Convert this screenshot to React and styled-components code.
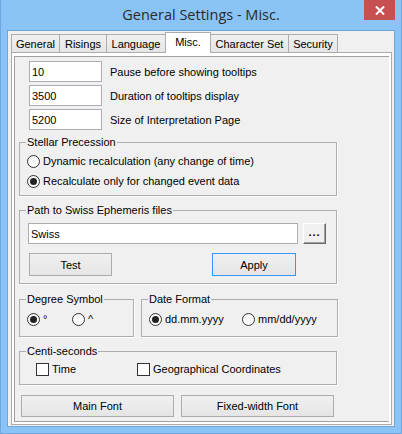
import React from 'react';
import styled, { createGlobalStyle } from 'styled-components';

const Global = createGlobalStyle`
  html, body { margin: 0; padding: 0; }
  body {
    width: 402px; height: 434px; overflow: hidden;
    background: #8ac4f6;
    font-family: "Liberation Sans", Arial, sans-serif;
    font-size: 11px; color: #000;
  }
  * { box-sizing: border-box; }
`;

const Window = styled.div`
  position: relative;
  width: 402px; height: 434px;
  display: flex; flex-direction: column;
  background: #8ac4f6;
  border: 1px solid #6fa6dc;
  border-top: none;
  padding: 0 6px 6px;
`;

const TitleBar = styled.div`
  height: 30px;
  display: flex; align-items: center; justify-content: center;
  font-family: "Open Sans", "Noto Sans", sans-serif;
  font-size: 14.5px; color: #2a2a2a;
  padding-bottom: 1px;
`;

const CloseButton = styled.div`
  position: absolute; top: 0; right: 6px;
  width: 31px; height: 20px;
  background: #c75050;
  display: flex; align-items: center; justify-content: center;
`;

const Client = styled.div`
  flex: 1;
  display: flex; flex-direction: column;
  background: #f0f0f0;
  border: 1px solid #6fa6dc;
  padding: 1px 2px 1px 3px;
`;

const TabRow = styled.div`
  height: 20px;
  display: flex; align-items: flex-start;
`;

const Tab = styled.div`
  position: relative;
  width: ${p => p.$w}px;
  margin-right: -1px;
  margin-top: ${p => (p.$active ? 0 : 2)}px;
  height: ${p => (p.$active ? 21 : 18)}px;
  border: 1px solid #acacac;
  border-bottom: none;
  background: ${p => (p.$active ? '#fff' : 'linear-gradient(#f0f0f0, #e5e5e5)')};
  z-index: ${p => (p.$active ? 2 : 1)};
  display: flex; align-items: center; justify-content: center;
  padding-bottom: ${p => (p.$active ? 3 : 0)}px;
  font-size: 11px; white-space: nowrap;
`;

const Panel = styled.div`
  flex: 1;
  display: flex;
  border: 1px solid #acacac;
  background: #fff;
  padding: 3px 2px 2px 2px;
`;

const Form = styled.div`
  flex: 1;
  display: flex; flex-direction: column; align-items: flex-start;
  background: #f0f0f0;
  border-top: 1px solid #a0a0a0;
  border-left: 1px solid #a0a0a0;
  border-bottom: 1px solid #a0a0a0;
  padding: 4px 0 0 4px;
`;

const InputList = styled.div`
  display: flex; flex-direction: column; gap: 3px;
  padding-left: 10px;
`;

const InputRow = styled.div`
  display: flex; align-items: center; gap: 8px;
`;

const TextInput = styled.input`
  width: ${p => p.$w}px; height: 21px;
  border: 1px solid #abadb3;
  background: #fff;
  padding: 0 2px;
  font-family: "Liberation Sans", Arial, sans-serif;
  font-size: 11px; color: #000;
  outline: none;
`;

const Group = styled.fieldset`
  margin: ${p => p.$mt || 0}px 0 0 0;
  width: ${p => p.$w}px;
  min-width: 0;
  border: 1px solid #adadad;
  box-shadow: 1px 1px 0 #fff;
  padding: ${p => p.$pad};
  display: flex; flex-direction: column;
`;

const Legend = styled.legend`
  margin-left: ${p => p.$ml}px;
  padding: 0 1px;
  font-size: 11px; line-height: 14px;
`;

const OptionRow = styled.div`
  display: flex; align-items: center;
  height: 20px;
`;

const Option = styled.label`
  display: flex; align-items: center; gap: 3px;
  width: ${p => (p.$w ? `${p.$w}px` : 'auto')};
  white-space: nowrap;
`;

const Radio = styled.span`
  position: relative;
  width: 13px; height: 13px; flex: none;
  border-radius: 50%;
  border: 1px solid #333;
  background: linear-gradient(#f4f4f4, #fff);
  &::after {
    content: '';
    display: ${p => (p.$checked ? 'block' : 'none')};
    position: absolute; left: 2px; top: 2px;
    width: 7px; height: 7px; border-radius: 50%;
    background: #222;
  }
`;

const Check = styled.span`
  width: 13px; height: 13px; flex: none;
  border: 1px solid #333;
  background: #fff;
`;

const PathRow = styled.div`
  display: flex; align-items: center; gap: 5px;
`;

const BrowseButton = styled.button`
  width: 23px; height: 21px;
  padding: 0 0 4px;
  background: #f0f0f0;
  border-top: 1px solid #fff; border-left: 1px solid #fff;
  border-right: 1px solid #696969; border-bottom: 1px solid #696969;
  box-shadow: inset -1px -1px 0 #a0a0a0;
  font-family: "Liberation Sans", Arial, sans-serif;
  font-size: 11px; font-weight: bold; letter-spacing: 1px;
`;

const ButtonRow = styled.div`
  display: flex; gap: ${p => p.$gap}px;
  margin: ${p => p.$m};
`;

const PushButton = styled.button`
  width: ${p => p.$w}px; height: ${p => p.$h}px;
  padding: 0;
  border: 1px solid ${p => (p.$default ? '#3399ff' : '#acacac')};
  background: linear-gradient(#f0f0f0, #e5e5e5);
  font-family: "Liberation Sans", Arial, sans-serif;
  font-size: 11px; color: #000;
`;

const GroupRow = styled.div`
  display: flex; gap: 7px;
  margin-top: 8px;
`;

const tabs = [
  ['General', 49], ['Risings', 48], ['Language', 60],
  ['Misc.', 46, true], ['Character Set', 79], ['Security', 50],
];

const inputs = [
  ['10', 'Pause before showing tooltips'],
  ['3500', 'Duration of tooltips display'],
  ['5200', 'Size of Interpretation Page'],
];

export default function App() {
  return (
    <>
      <Global />
      <Window>
        <TitleBar>General Settings - Misc.</TitleBar>
        <CloseButton>
          <svg width="10" height="9" viewBox="0 0 10 9">
            <path d="M1 0.5 L9 8.5 M9 0.5 L1 8.5" stroke="#fff" strokeWidth="2" />
          </svg>
        </CloseButton>
        <Client>
          <TabRow>
            {tabs.map(([t, w, a]) => (
              <Tab key={t} $w={w} $active={a}>{t}</Tab>
            ))}
          </TabRow>
          <Panel>
            <Form>
              <InputList>
                {inputs.map(([v, l]) => (
                  <InputRow key={l}>
                    <TextInput $w={73} defaultValue={v} />
                    <span>{l}</span>
                  </InputRow>
                ))}
              </InputList>

              <Group $mt={5} $w={318} $pad="2px 7px 4px 7px">
                <Legend $ml={-1}>Stellar Precession</Legend>
                <OptionRow>
                  <Option><Radio />Dynamic recalculation (any change of time)</Option>
                </OptionRow>
                <OptionRow>
                  <Option><Radio $checked />Recalculate only for changed event data</Option>
                </OptionRow>
              </Group>

              <Group $mt={7} $w={318} $pad="6px 8px 7px 8px">
                <Legend $ml={-2}>Path to Swiss Ephemeris files</Legend>
                <PathRow>
                  <TextInput $w={270} defaultValue="Swiss" />
                  <BrowseButton>...</BrowseButton>
                </PathRow>
                <ButtonRow $gap={100} $m="9px 0 0 1px">
                  <PushButton $w={83} $h={23}>Test</PushButton>
                  <PushButton $w={84} $h={23} $default>Apply</PushButton>
                </ButtonRow>
              </Group>

              <GroupRow>
                <Group $w={115} $pad="3px 7px 7px 7px">
                  <Legend $ml={-1}>Degree Symbol</Legend>
                  <OptionRow>
                    <Option $w={45}><Radio $checked />°</Option>
                    <Option><Radio />^</Option>
                  </OptionRow>
                </Group>
                <Group $w={197} $pad="3px 7px 7px 7px">
                  <Legend $ml={-1}>Date Format</Legend>
                  <OptionRow>
                    <Option $w={93}><Radio $checked />dd.mm.yyyy</Option>
                    <Option><Radio />mm/dd/yyyy</Option>
                  </OptionRow>
                </Group>
              </GroupRow>

              <Group $mt={7} $w={318} $pad="1px 7px 5px 16px">
                <Legend $ml={-10}>Centi-seconds</Legend>
                <OptionRow>
                  <Option $w={101}><Check />Time</Option>
                  <Option><Check />Geographical Coordinates</Option>
                </OptionRow>
              </Group>

              <ButtonRow $gap={7} $m="10px 0 0 2px">
                <PushButton $w={153} $h={22}>Main Font</PushButton>
                <PushButton $w={153} $h={22}>Fixed-width Font</PushButton>
              </ButtonRow>
            </Form>
          </Panel>
        </Client>
      </Window>
    </>
  );
}
